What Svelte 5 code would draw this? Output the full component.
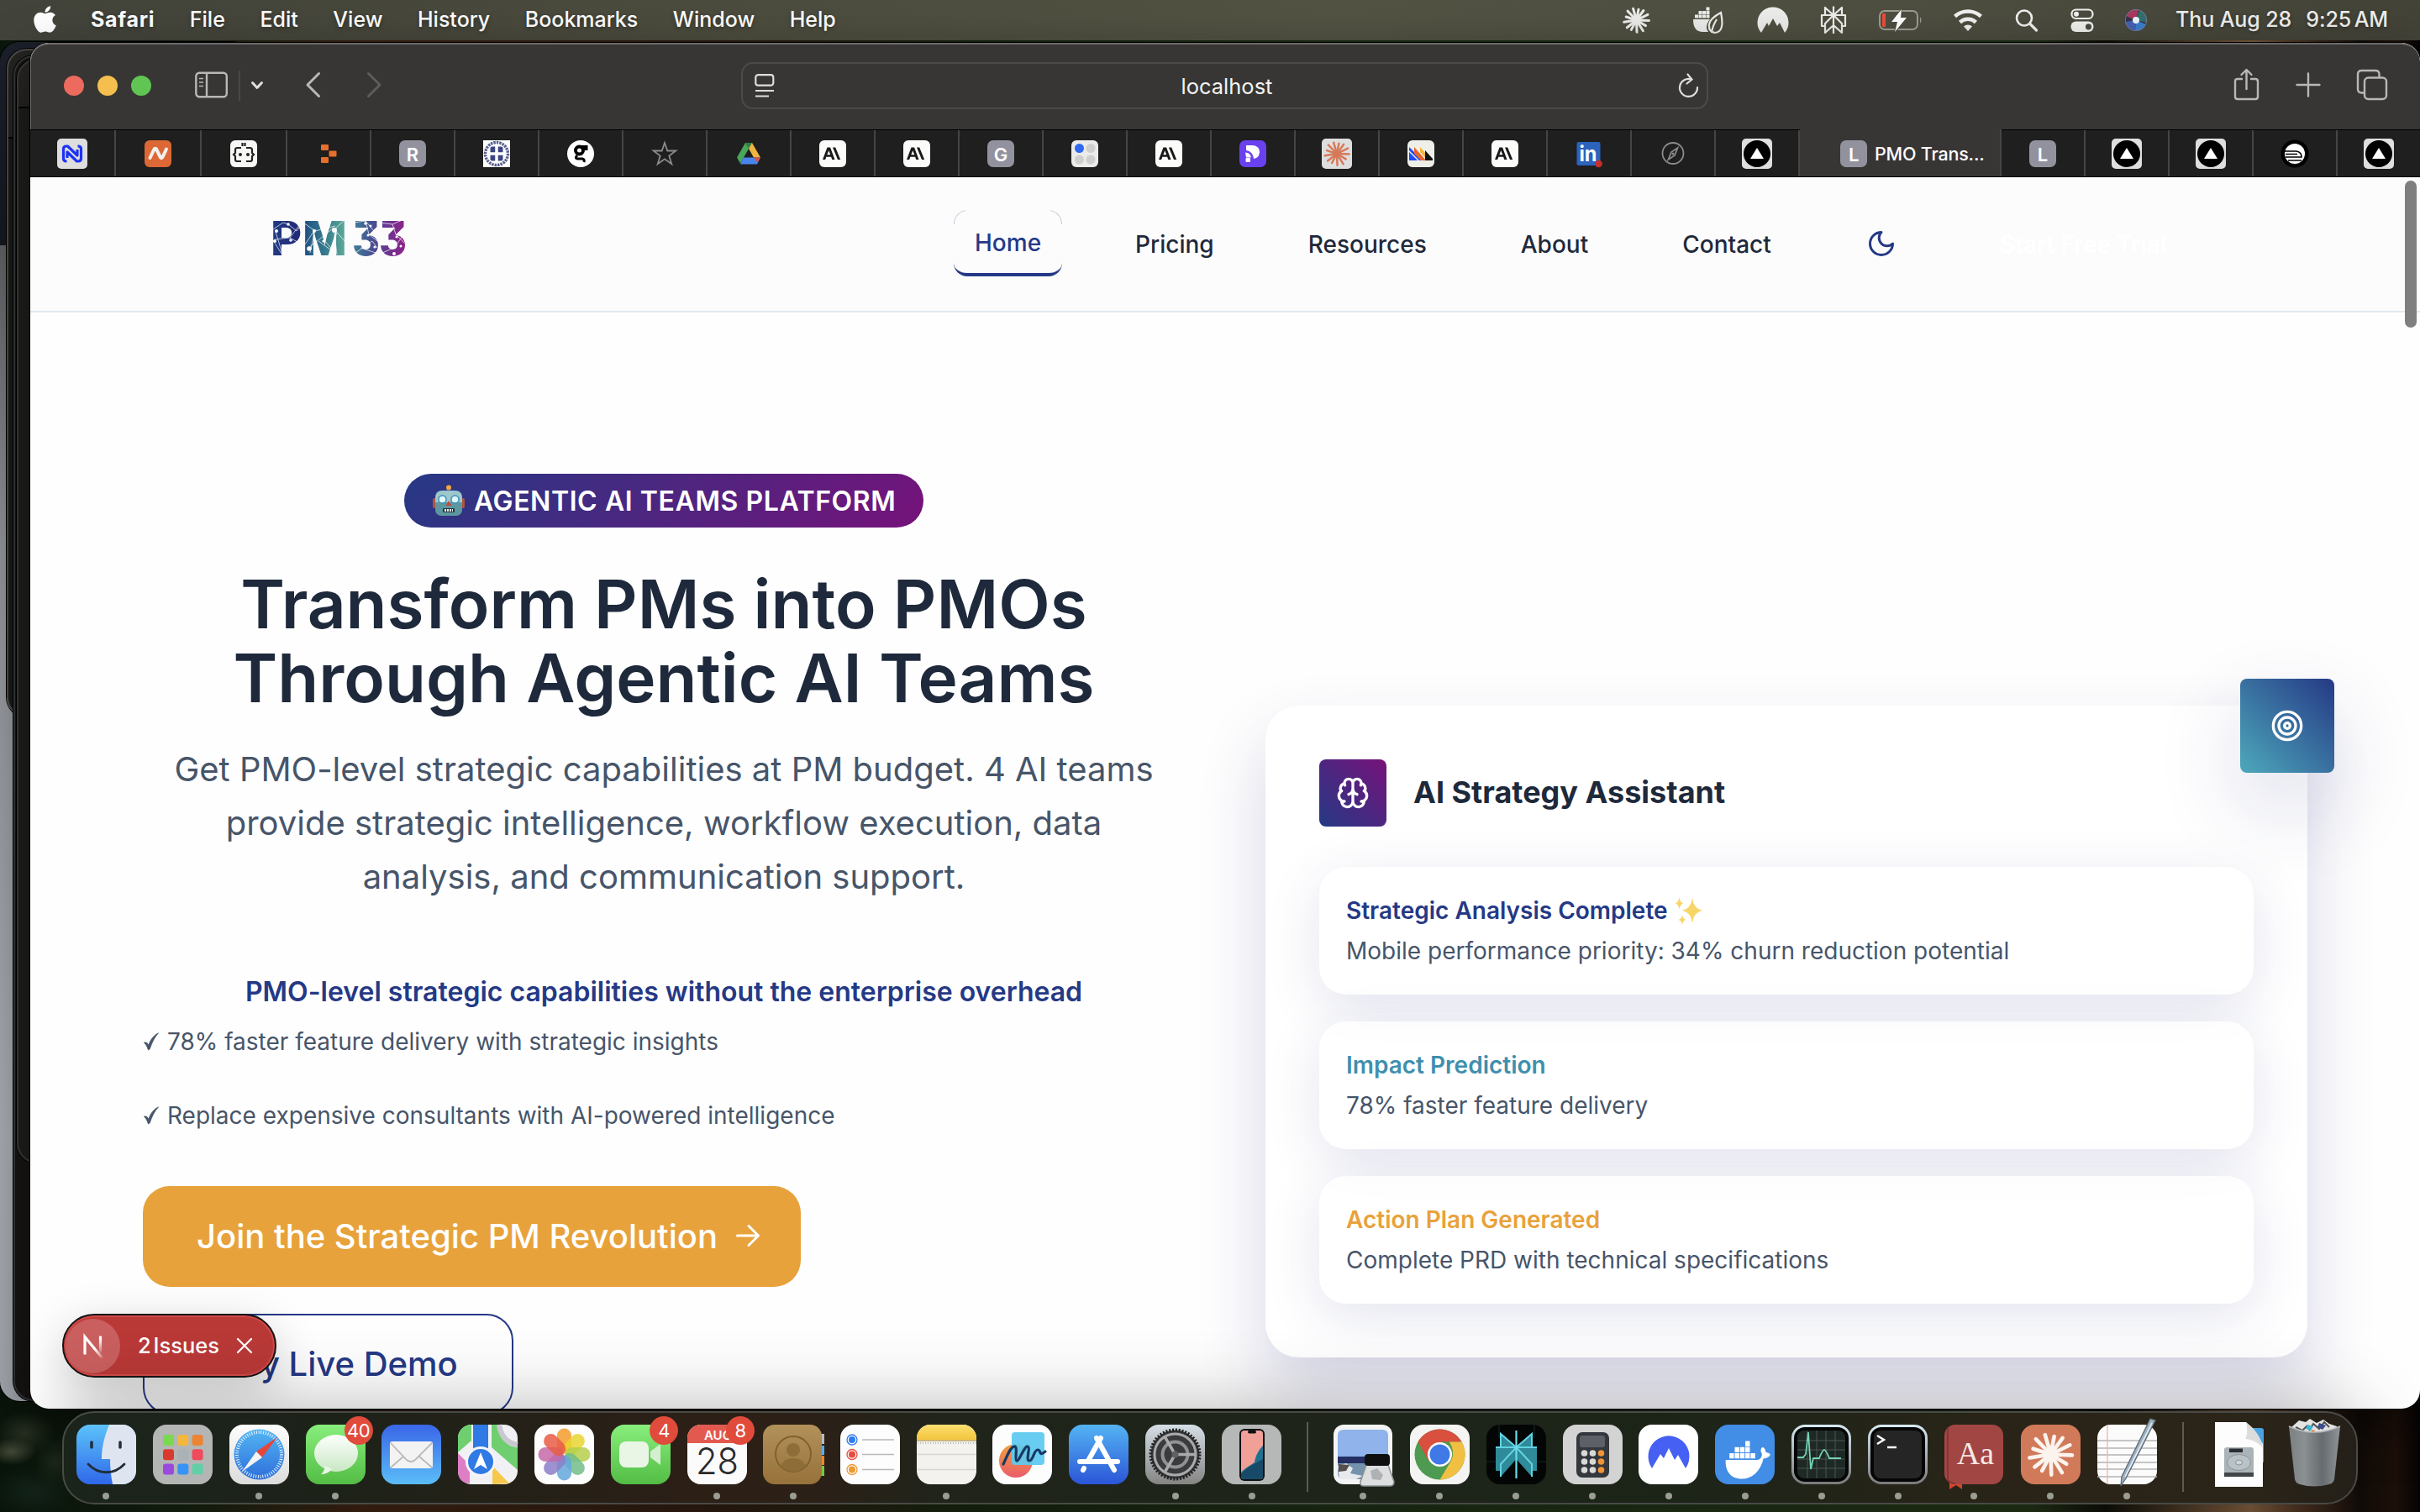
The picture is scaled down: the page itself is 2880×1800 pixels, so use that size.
<script>
  const menus = ['File', 'Edit', 'View', 'History', 'Bookmarks', 'Window', 'Help'];

  // Uneven sunburst used by the Claude mark, centred on 0,0.
  const burst = (r, w, color) =>
    [2, 31, 58, 88, 118, 142, 171, 198, 226, 254, 281, 306, 334]
      .map((a, i) => {
        const len = r * (i % 3 === 1 ? 0.86 : i % 2 ? 0.95 : 1);
        const t = (a * Math.PI) / 180;
        return `<line x1="0" y1="0" x2="${(Math.cos(t) * len).toFixed(1)}" y2="${(Math.sin(t) * len).toFixed(1)}" stroke="${color}" stroke-width="${w}" stroke-linecap="round"/>`;
      })
      .join('');

  const whale = (c) =>
    `<path fill="${c}" d="M-27 -1H15c4-1 6-4 6-8-3-5-1-8 1-9 3 2 4 4 4 7 3 0 5 1 6 3-2 4-6 5-9 5-4 17-15 27-29 27C-20 24-28 14-27-1Z"/><g fill="${c}"><path d="M-22-10h6v7h-6zM-15-10h6v7h-6zM-8-10h6v7h-6zM-1-10h6v7h-6zM6-10h6v7H6zM-15-18h6v7h-6zM-8-18h6v7h-6zM-1-18h6v7h-6zM-1-26h6v7h-6z"/></g>`;

  const plex = (c, w) =>
    `<g fill="none" stroke="${c}" stroke-width="${w}" stroke-linejoin="round"><path d="M0-16.500V16M0-6L-10-15V-6M0-6L10-15V-6M-10-6H-14V7H-10M10-6H14V7H10M-14-6H14M0-6L-10 4V15L0 6M0-6L10 4V15L0 6"/></g>`;

  const tile = (fill) => `<rect x="2" y="2" width="32" height="32" rx="6" fill="${fill}"/>`;
  const letterTile = (l) =>
    `<rect x="2" y="2" width="32" height="32" rx="7" fill="#92929f"/><text x="18" y="26.5" text-anchor="middle" font-size="22" font-weight="600" fill="#fff">${l}</text>`;
  const anthropic =
    tile('#fbfbfa') +
    '<path fill="#191919" fill-rule="evenodd" d="M11.500 10.500h3.600l5.400 14.600h-3.200l-1.200-3.300h-5.800L9.200 25.100H6zM13.300 14.200l-2 5h4zM18 10.500h3.200l6 14.600H24z"/>';
  const triangle =
    '<rect width="36" height="36" rx="5" fill="#dedede"/><circle cx="18" cy="18" r="16" fill="#000"/><path d="M18 11l8 13H10z" fill="#fff"/>';

  const fav = {
    n: '<rect width="36" height="36" rx="5" fill="#dedede"/><path d="M11.500 27H11q-3.500 0-3.500-3.500v-11Q7.500 9 11 9h1.500L24 20V13M24.500 9h.5q3.500 0 3.500 3.500v11q0 3.500-3.500 3.500h-1.500L12 16v7" fill="none" stroke="#1c33f5" stroke-width="3.200" stroke-linejoin="round"/>',
    neon: tile('#dc6836') + '<path d="M8.500 23l5-10.500q1-1.500 2.500 0l5 10q1 1.500 2.500-.5L28 12.500" fill="none" stroke="#f3f0ee" stroke-width="4" stroke-linecap="round" stroke-linejoin="round"/>',
    bot: tile('#f7f7f6') + '<g fill="none" stroke="#222" stroke-width="2.200"><path d="M15 11H10.500Q8 11 8 13.500V17L6 19l2 2v4q0 2 2.500 2H15M21 11h4.500Q28 11 28 13.500V17l2 2-2 2v4q0 2-2.500 2H21M16.500 5v4M19.500 5v4"/></g><circle cx="14" cy="19" r="2" fill="#222"/><circle cx="23" cy="19" r="2" fill="#222"/>',
    steps: '<g fill="#e66f2d"><rect x="9" y="7" width="9" height="7" rx="1"/><rect x="18.500" y="14.500" width="9" height="7" rx="1"/><rect x="9" y="22" width="9" height="7" rx="1"/></g>',
    R: letterTile('R'),
    G: letterTile('G'),
    L: letterTile('L'),
    cross: '<rect x="2" y="2" width="32" height="32" fill="#fff"/><circle cx="18" cy="18" r="13.500" fill="none" stroke="#5b6190" stroke-width="3.500" stroke-dasharray="2.500 1"/><rect x="10.500" y="9.500" width="15" height="17" rx="2" fill="#3c4583"/><path d="M18 9v18M10 18h16" stroke="#fff" stroke-width="3.500"/>',
    g: '<circle cx="18" cy="18" r="16" fill="#fff"/><circle cx="16.500" cy="14" r="4.500" fill="none" stroke="#000" stroke-width="4"/><path d="M20 9.500h5v3h-4zM14 20q-4 4 2 4h4q3 .5 2 4" fill="none" stroke="#000" stroke-width="3"/>',
    star: '<path d="M18 5l3.300 9.500h10l-8 6 3 9.800-8.300-6-8.300 6 3-9.800-8-6h10z" fill="none" stroke="#8b8b8a" stroke-width="1.800"/>',
    drive: '<path d="M14 5h8l10 17.500h-8z" fill="#f0b53f"/><path d="M14 5L4 22.500l4 7L18 12z" fill="#4aa65a"/><path d="M14 5h8l-4 7z" fill="#2f7f43"/><path d="M11.500 22.500H32l-4 8H8z" fill="#4b83ec"/><path d="M24 22.500h8l-3.500 6z" fill="#dd4f40"/>',
    A: anthropic,
    dots: tile('#ebebea') + '<circle cx="11.500" cy="11.500" r="5.500" fill="#3069f0"/><g fill="#cfcfcf"><circle cx="25" cy="11.500" r="5.500"/><circle cx="11.500" cy="25" r="5.500"/><circle cx="25" cy="25" r="5.500"/></g>',
    P: '<rect x="2" y="2" width="32" height="32" rx="7" fill="#6a41ee"/><path d="M10 8h8a8 7.500 0 0 1 8 8.500q-1 7-7 7.500-1-9-9-10z" fill="#fff"/><path d="M9 16.500q6 0 7 6H10z" fill="#fff"/><rect x="9.500" y="23" width="5.500" height="5" rx="1" fill="#fff"/>',
    claude: `<rect width="36" height="36" rx="5" fill="#dedede"/><g transform="translate(18 18)">${burst(14.5, 2.5, '#d67a59')}</g>`,
    hog: tile('#eeefe9') + '<path d="M4 10l16 16h-4L4 14z" fill="#1d4aff"/><path d="M4 16l10 10H4z" fill="#1d4aff"/><path d="M10 10l14 16h-6L10 18z" fill="#e6662e"/><path d="M17 10l9 10v6l-9-10z" fill="#f2b83a"/><path d="M23 14l9 10v2h-9z" fill="#111"/>',
    in: '<rect x="3.500" y="4" width="28" height="28" rx="2" fill="#2b63bd"/><text x="17" y="27" text-anchor="middle" font-size="25" font-weight="700" fill="#fff" textLength="21" lengthAdjust="spacingAndGlyphs">in</text><circle cx="29.500" cy="30" r="4.300" fill="#c7302b"/>',
    compass: '<circle cx="18" cy="17.500" r="12.500" fill="none" stroke="#8b8b8a" stroke-width="1.800"/><path d="M23.500 11l-3.500 9-7.500 5 3.500-9z" fill="none" stroke="#8b8b8a" stroke-width="1.800"/><circle cx="18" cy="18" r="1.500" fill="#8b8b8a"/>',
    tri: triangle,
    dome: '<circle cx="18" cy="18" r="16.500" fill="#000"/><circle cx="18" cy="18" r="12" fill="#fff"/><path d="M6 15h14q6 1 6 7H7M7 18.500h14M10 26h16" fill="none" stroke="#000" stroke-width="1.600"/>'
  };

  const tabs = ['n', 'neon', 'bot', 'steps', 'R', 'cross', 'g', 'star', 'drive', 'A', 'A', 'G', 'dots', 'A', 'P', 'claude', 'hog', 'A', 'in', 'compass', 'tri', 'active', 'L', 'tri', 'tri', 'dome', 'tri'];

  const base = (fill) => `<rect x="1" y="1" width="71" height="71" rx="16" fill="${fill}"/>`;
  const petals = ['#f39c2d', '#e9d52f', '#b5cf4a', '#72bd8a', '#65a7dc', '#8b7fc9', '#c568a7', '#e95c45']
    .map((c, i) => `<rect x="-8.500" y="-31" width="17" height="30" rx="8.500" fill="${c}" opacity=".85" transform="rotate(${i * 45})"/>`)
    .join('');
  const pads = ['#79d94f', '#f3b73c', '#ec8433', '#d83a2f', '#a9b2b6', '#ee4b5d', '#9a49dd', '#3793f6', '#62cfa6']
    .map((c, i) => `<rect x="${13 + (i % 3) * 17.3}" y="${13 + Math.floor(i / 3) * 17.3}" width="13" height="13" rx="3" fill="${c}"/>`)
    .join('');
  const keys = [0, 1, 2]
    .flatMap((r) => [0, 1, 2].map((c) => `<circle cx="${26.5 + c * 10}" cy="${35 + r * 10}" r="3.800" fill="${c === 2 ? '#f09437' : '#d9d9d9'}"/>`))
    .join('');

  const art = {
    finder: base('url(#dBlue)') + '<path d="M40 1C33 18 31 30 31 42h10c0 10 1 20 3 30h12a16 16 0 0 0 16-16V17A16 16 0 0 0 56 1z" fill="#dfe5f0"/><path d="M19 22v6M53 22v6" stroke="#222d38" stroke-width="3.500" stroke-linecap="round"/><path d="M15 48c12 13 31 13 43 0" fill="none" stroke="#222d38" stroke-width="2.800" stroke-linecap="round"/>',
    launchpad: base('#b4b6b5') + pads,
    safari: base('url(#dWhite)') + '<circle cx="36.500" cy="36.500" r="30" fill="url(#dSaf)"/><circle cx="36.500" cy="36.500" r="26.500" fill="none" stroke="#e9f5ff" stroke-width="4" stroke-dasharray="1 1.800"/><path d="M58 16L40 40l-7-7z" fill="#e6453a"/><path d="M16 57l17-24 7 7z" fill="#f4f4f4"/>',
    messages: base('url(#dGreen)') + '<ellipse cx="37" cy="35" rx="26" ry="22" fill="url(#dBub)"/><path d="M24 50q-1 7-5 10 8 0 13-6z" fill="#eaf5e8"/>',
    mail: base('url(#dMail)') + '<rect x="11" y="21" width="51" height="32" rx="3" fill="#f3f3f3"/><path d="M12 23l19 20q5 4 10 0l20-20M12 52l15-13M61 52L46 39" fill="none" stroke="#b9b9b9" stroke-width="1.800"/>',
    maps: base('#f1f0f4') + '<path d="M1 17A16 16 0 0 1 17 1l0 19L1 34z" fill="#6fcf70"/><path d="M41 1h9c0 18 10 26 22 27v27L41 28z" fill="#6fcf70"/><path d="M1 35l14 14v22Q1 70 1 56z" fill="#de7fc5"/><path d="M42 50l20 21-20 1z" fill="#f6c84c"/><path d="M19 1h18v34H19z" fill="#2f7ae5"/><path d="M50 1c2 14 10 22 22 24" fill="none" stroke="#c9c8cf" stroke-width="6"/><circle cx="28" cy="45" r="18" fill="#f5f5f8"/><circle cx="28" cy="45" r="15" fill="#2f7ae5"/><path d="M28 34l8 20-8-5-8 5z" fill="#fff"/>',
    photos: base('#fdfdfd') + `<g transform="translate(36.500 36.500)">${petals}</g>`,
    facetime: base('url(#dGreen)') + '<rect x="11" y="21" width="35" height="31" rx="8" fill="#e9f6e6"/><path d="M48 33l12-9v25l-12-9z" fill="#d5eecf"/>',
    calendar: base('#fbfbfb') + '<path d="M1 23V17A16 16 0 0 1 17 1h39a16 16 0 0 1 16 16v6z" fill="#e25a4f"/><text x="21" y="18.500" font-size="15" font-weight="600" fill="#fff">AUG</text><text x="36.500" y="60" text-anchor="middle" font-size="43" font-weight="300" fill="#2b2b2b" textLength="51" lengthAdjust="spacingAndGlyphs">28</text>',
    contacts: '<path d="M62 12h11v12H62z" fill="#b9b9b9"/><path d="M62 26h11v11H62z" fill="#5aaee9"/><path d="M62 38h11v11H62z" fill="#e9872e"/><path d="M62 50h11v12H62z" fill="#7ac943"/><rect x="0" y="1" width="70" height="71" rx="14" fill="url(#dTan)"/><g fill="none" stroke="#80602f" stroke-width="2"><circle cx="36" cy="36" r="21"/></g><circle cx="36" cy="31" r="8" fill="#8e6d38"/><path d="M21 50q4-9 15-9t15 9q-6 7-15 7t-15-7z" fill="#8e6d38"/>',
    reminders: base('#fdfdfd') + '<g fill="none" stroke-width="1.300"><circle cx="15" cy="19" r="6" stroke="#2f7bf0"/><circle cx="15" cy="36.500" r="6" stroke="#e84c3d"/><circle cx="15" cy="54.500" r="6" stroke="#ee9a34"/></g><circle cx="15" cy="19" r="4" fill="#2f7bf0"/><circle cx="15" cy="36.500" r="4" fill="#e84c3d"/><circle cx="15" cy="54.500" r="4" fill="#ee9a34"/><path d="M27 19h38M27 36.500h38M27 54.500h38" stroke="#b9b9be" stroke-width="1.500"/>',
    notes: base('#f4f2ee') + '<path d="M1 19V17A16 16 0 0 1 17 1h39a16 16 0 0 1 16 16v2z" fill="url(#dYel)"/><path d="M1 20h71" stroke="#c9b880" stroke-width="2"/><path d="M2 23h70" stroke="#bbb" stroke-width="2" stroke-dasharray="1 2"/><path d="M1 36.500h71M1 54.500h71" stroke="#d8d6d1" stroke-width="1.500"/>',
    freeform: base('#fdfdfd') + '<circle cx="29" cy="44" r="20" fill="url(#dOr)"/><rect x="24" y="10" width="39" height="39" rx="4" fill="#5ec9f0" opacity=".93"/><path d="M14 48c5-10 8-20 13-21s0 16 3 17 9-18 13-17-3 17 2 17 5-13 10-13 0 9 9 2" fill="none" stroke="#163a66" stroke-width="3.200" stroke-linecap="round"/>',
    appstore: base('url(#dApp)') + '<g stroke="#fff" stroke-width="6" stroke-linecap="round" fill="none"><path d="M34 17l21 38M39 17L24 44M14 45h45M19 53l-1 2"/></g>',
    settings: base('url(#dGray)') + '<circle cx="36.500" cy="36.500" r="29" fill="#3a3b3d"/><circle cx="36.500" cy="36.500" r="29" fill="none" stroke="#222" stroke-width="4" stroke-dasharray="2 1.800"/><circle cx="36.500" cy="36.500" r="24.500" fill="none" stroke="#a8aaac" stroke-width="3"/><circle cx="36.500" cy="36.500" r="15" fill="none" stroke="#8f9193" stroke-width="4"/><path d="M36.500 36.500H60M36.500 36.500L24.500 16M36.500 36.500L24.500 57" stroke="#a8aaac" stroke-width="3.500"/><circle cx="36.500" cy="36.500" r="4" fill="#606163"/>',
    iphone: base('#b5b8b7') + '<rect x="22" y="6" width="30" height="62" rx="6" fill="#101214"/><rect x="24" y="8" width="26" height="58" rx="4" fill="#f0a096"/><path d="M50 26c-5 5-9 12-10 20-6 4-13 8-16 12v4q0 4 4 4h18q4 0 4-4z" fill="#22708f"/><path d="M50 42c-11 6-20 10-26 18v2q0 4 4 4h18q4 0 4-4z" fill="#164a68"/><rect x="32" y="8" width="10" height="3.500" rx="1.700" fill="#101214"/>',
    preview: '<rect x="1" y="1" width="70" height="71" rx="12" fill="#f4f4f4"/><path d="M6 40V14q0-7 7-7h46q7 0 7 7v26z" fill="#8fb3ea"/><path d="M6 39h60v8H6z" fill="#252f63"/><path d="M6 47h60v19H13q-7 0-7-7z" fill="#7592ac"/><path d="M6 50l10-3 8 6-3 6 15 3-8 4H8z" fill="#e7e9ec"/><path d="M7 48l13 1-4 7-9 1z" fill="#574e50"/><path d="M40 49h26l7 20q0 5-5 5H37q-5 0-4-5z" fill="#dddedf" stroke="#8b8f92" stroke-width="1.500"/><rect x="38" y="36" width="30" height="14" rx="4" fill="#101010"/><path d="M45 56l8-3 7 8-3 6-10-1z" fill="#aeb2b5"/>',
    chrome: base('#f4f4f3') + '<circle cx="36.500" cy="36.500" r="30" fill="#4d9a50"/><path d="M36.500 6.500a30 30 0 0 1 26 15H36.500L23 44 10.500 21.500a30 30 0 0 1 26-15z" fill="#d9503f"/><path d="M62.500 21.500a30 30 0 0 1-26 45L50 44q5-10-2-22.500z" fill="#f1bf41"/><circle cx="36.500" cy="36.500" r="14.500" fill="#fff"/><circle cx="36.500" cy="36.500" r="12" fill="#3f79e6"/>',
    perplexity: base('#040606') + '<path d="M16 1v16M58 1v16M1 45h13M60 45h12" stroke="#172425" stroke-width="1.200"/><g fill="#2f8a99"><path d="M36.500 28L18 11v17h-6v28h6v7l18.500-21L55 63v-7h6V28h-6V11z"/></g><path d="M36.500 28L18 12v16M36.500 28L55 12v16M12 28h49M36.500 28L18 48v15M36.500 28L55 48v15" fill="none" stroke="#62d3e2" stroke-width="2"/><path d="M36.500 8v57" stroke="#6fdcea" stroke-width="2.200"/>',
    calculator: base('#d2d3d2') + '<rect x="17" y="10" width="39" height="54" rx="7" fill="#34373c"/><rect x="21" y="14" width="30" height="14" rx="3" fill="#5d6167"/>' + keys,
    nord: base('#fff') + '<path d="M17 53a24.500 24.500 0 1 1 40 0L48 37l-4 6-7-14-6 12-4-5z" fill="#4560f3"/>',
    docker: base('#428de5') + `<g transform="translate(38 44) scale(.9)">${whale('#fff')}</g>`,
    activity: base('url(#dRim)') + '<rect x="4" y="4" width="65" height="65" rx="13" fill="#060606"/><rect x="8" y="8" width="57" height="57" rx="8" fill="#1e2926"/><path d="M20 8v57M31 8v57M42 8v57M53 8v57M8 20h57M8 31h57M8 42h57M8 53h57" stroke="#4b5753" stroke-width="1"/><path d="M8 40h7l3-4 3-26 3 44 3-13h7q4-10 6-10t6 10h14" fill="none" stroke="#74d2b0" stroke-width="1.800"/>',
    terminal: base('url(#dRim)') + '<rect x="4" y="4" width="65" height="65" rx="13" fill="#050505"/><rect x="8" y="8" width="57" height="57" rx="8" fill="#252525"/><path d="M12 14l8 5-8 5" fill="none" stroke="#fff" stroke-width="2.500"/><path d="M24 28h11" stroke="#fff" stroke-width="2.500"/>',
    dictionary: '<path d="M7 64h15v14l-7-5-8 5z" fill="#d3452f"/><rect x="1" y="1" width="70" height="71" rx="13" fill="#a24644"/><path d="M5 4v63q4 4 9 4" fill="none" stroke="#7c302f" stroke-width="1.500"/><text x="38" y="48" text-anchor="middle" font-size="38" fill="#f4e9e5" style="font-family:\'Liberation Serif\',serif">Aa</text>',
    claude: base('#d17a5a') + `<g transform="translate(36.500 36.500)">${burst(25.5, 4.6, '#fbf3ee')}</g>`,
    textedit: base('#fbfbfb') + '<path d="M1 20h71M1 29h71M1 37h71M1 46h71M1 54h71M1 63h71" stroke="#b4b4b4" stroke-width="1.300"/><path d="M13 1v71" stroke="#edb4ac" stroke-width="1.300"/><path d="M64-6l6 2L35 65l-6 9 1-11z" fill="#9fb2c3" stroke="#5d6a75" stroke-width="1.300"/><path d="M66-1L34 63" stroke="#e8eff4" stroke-width="1.500"/>',
    file: '<rect x="42" y="5" width="24" height="42" rx="3" fill="#4aa3e0"/><path d="M8-2h37l20 26v51H8z" fill="#fdfdfd"/><path d="M45-2q3 13-1 20 10 0 21 10-3-17-20-30z" fill="#dcdcdc"/><rect x="19" y="28" width="35" height="35" rx="3" fill="#aab3b8"/><rect x="25" y="29.500" width="16" height="4.500" fill="#2a2e33"/><ellipse cx="36.500" cy="46" rx="14" ry="9.500" fill="#b9c2c6" stroke="#8a9499"/><ellipse cx="36.500" cy="46" rx="4" ry="3" fill="#cdd4d7" stroke="#8a9499"/><path d="M19 58h35v5H19z" fill="#40464a"/>',
    trash: '<path d="M8 5l10-9 8 2 5-4 8 5 8-4 7 5 9 3-2 9H12z" fill="#e3e3e2"/><path d="M14 4l8 4 6-6M30 8l5-8 7 6 6-8 6 6" fill="none" stroke="#55504c" stroke-width="2"/><path d="M28 1l7 2-3 5-6-2z" fill="#38b6d4"/><path d="M42-1l8 3-4 5-6-3z" fill="#3a4c90"/><path d="M32 7l5 1-2 4z" fill="#dd7a38"/><path d="M6 3q30 14 61 0L60 66q-1 5-6 6-18 5-35 0-5-1-6-6z" fill="url(#dCan)"/><path d="M6 3q30 14 61 0" fill="none" stroke="#b5babd" stroke-width="1.500"/>'
  };

  const apps = [
    { id: 'finder', on: true }, { id: 'launchpad' }, { id: 'safari', on: true },
    { id: 'messages', on: true, badge: '40' }, { id: 'mail' }, { id: 'maps' }, { id: 'photos' },
    { id: 'facetime', badge: '4' }, { id: 'calendar', on: true, badge: '8' }, { id: 'contacts', on: true },
    { id: 'reminders' }, { id: 'notes', on: true }, { id: 'freeform' }, { id: 'appstore' },
    { id: 'settings', on: true }, { id: 'iphone', on: true }, { id: '|' },
    { id: 'preview', on: true }, { id: 'chrome', on: true }, { id: 'perplexity', on: true },
    { id: 'calculator', on: true }, { id: 'nord', on: true }, { id: 'docker', on: true },
    { id: 'activity', on: true }, { id: 'terminal', on: true }, { id: 'dictionary', on: true },
    { id: 'claude', on: true }, { id: 'textedit', on: true }, { id: '|' },
    { id: 'file' }, { id: 'trash' }
  ];

  const insights = [
    { tone: 'navy', title: 'Strategic Analysis Complete', spark: true, text: 'Mobile performance priority: 34% churn reduction potential' },
    { tone: 'teal', title: 'Impact Prediction', text: '78% faster feature delivery' },
    { tone: 'gold', title: 'Action Plan Generated', text: 'Complete PRD with technical specifications' }
  ];
</script>

<div class="desktop">
  <svg class="defs" width="0" height="0" aria-hidden="true">
    <defs>
      <linearGradient id="dBlue" x2="0" y2="1"><stop stop-color="#5cc3fa" /><stop offset="1" stop-color="#2f68ea" /></linearGradient>
      <linearGradient id="dSaf" x2="0" y2="1"><stop stop-color="#53b5f2" /><stop offset="1" stop-color="#2d6fdc" /></linearGradient>
      <linearGradient id="dWhite" x2="0" y2="1"><stop stop-color="#fdfdfd" /><stop offset="1" stop-color="#dcdcdc" /></linearGradient>
      <linearGradient id="dGreen" x2="0" y2="1"><stop stop-color="#88ee7c" /><stop offset="1" stop-color="#53bd44" /></linearGradient>
      <linearGradient id="dBub" x2="0" y2="1"><stop stop-color="#fdfffd" /><stop offset="1" stop-color="#c9e8c4" /></linearGradient>
      <linearGradient id="dMail" x2="0" y2="1"><stop stop-color="#3a66e8" /><stop offset="1" stop-color="#5bbdf8" /></linearGradient>
      <linearGradient id="dTan" x2="0" y2="1"><stop stop-color="#b2915a" /><stop offset="1" stop-color="#97723a" /></linearGradient>
      <linearGradient id="dYel" x2="0" y2="1"><stop stop-color="#fadf70" /><stop offset="1" stop-color="#f3c53d" /></linearGradient>
      <linearGradient id="dOr" x2="0" y2="1"><stop stop-color="#f2a13c" /><stop offset="1" stop-color="#ea5c6c" /></linearGradient>
      <linearGradient id="dApp" x2="0" y2="1"><stop stop-color="#54b4f3" /><stop offset="1" stop-color="#2b55d8" /></linearGradient>
      <linearGradient id="dGray" x2="0" y2="1"><stop stop-color="#d5dfe6" /><stop offset="1" stop-color="#858583" /></linearGradient>
      <linearGradient id="dRim" x2="0" y2="1"><stop stop-color="#d6eaf2" /><stop offset="1" stop-color="#7a7a7c" /></linearGradient>
      <linearGradient id="dCan"><stop stop-color="#7b8083" /><stop offset=".3" stop-color="#8b9093" /><stop offset=".65" stop-color="#666b6f" /><stop offset="1" stop-color="#8f9497" /></linearGradient>
    </defs>
  </svg>

  <div class="behind pale"></div>
  <div class="behind slate"></div>
  <div class="behind tall"></div>
  <div class="behind front"></div>

  <header class="menubar">
    <svg class="apple" viewBox="0 0 384 512"><path fill="#fff" d="M318.700 268.700c-.2-36.700 16.400-64.400 50-84.800-18.800-26.900-47.200-41.700-84.700-44.600-35.500-2.800-74.300 20.700-88.500 20.700-15 0-49.400-19.700-76.400-19.700C63.300 141.200 4 184.800 4 273.500q0 39.300 14.400 81.200c12.800 36.700 59 126.700 107.200 125.200 25.200-.6 43-17.900 75.800-17.900 31.800 0 48.300 17.900 76.400 17.900 48.600-.7 90.400-82.500 102.600-119.300-65.200-30.700-61.700-90-61.700-91.900zm-56.600-164.200c27.300-32.400 24.800-61.900 24-72.500-24.100 1.400-52 16.400-67.900 34.900-17.500 19.800-27.800 44.300-25.600 71.900 26.100 2 49.900-11.400 69.500-34.300z" /></svg>
    <nav class="menus">
      <b>Safari</b>
      {#each menus as m}<span>{m}</span>{/each}
    </nav>
    <div class="status">
      <svg width="85" viewBox="-42.500 -18 85 36">{@html burst(15, 3, '#ececea')}</svg>
      <svg width="82" viewBox="-41 -18 82 36">
        <path fill="#ececea" d="M-16-1H4Q-3 7 2 14H-3Q-16 15-16-1zM-14-6.500h4v4h-4zM-9.500-6.500h4v4h-4zM-5-6.500h4v4h-4zM-.5-6.500h4v4h-4zM-9.500-11h4v4h-4zM-5-11h4v4h-4zM-.5-11h4v4h-4zM-.5-15.500h4v4h-4z" />
        <path d="M17-9q5 23-7 24-8-1-7-10 1-7 14-14zM12-1Q7 7 6 15" fill="none" stroke="#ececea" stroke-width="2.200" />
      </svg>
      <svg width="76" viewBox="-38 -18 76 36"><path d="M-14 15a18.500 18.500 0 1 1 28 0L8 3 5 7 0-2-5 7-7 3z" fill="#ececea" /></svg>
      <svg width="68" viewBox="-34 -18 68 36">{@html plex('#ececea', 2.2)}</svg>
      <svg width="88" viewBox="-44 -18 88 36">
        <rect x="-23" y="-11" width="45" height="22" rx="6" fill="none" stroke="#9c9c93" stroke-width="2" />
        <path d="M25-4q3 4 0 8z" fill="#9c9c93" />
        <rect x="-20" y="-8" width="4" height="16" rx="1" fill="#ee4c38" />
        <path d="M3-13L-9 2h7l-3 12L9-3H2z" fill="#fff" stroke="#4c4d40" stroke-width="2" paint-order="stroke" />
      </svg>
      <svg width="76" viewBox="-38 -18 76 36">
        <g fill="none" stroke="#f0f0ee" stroke-width="4.500"><path d="M-15.500-4.500a23 23 0 0 1 31 0M-9.500 2.500a14 14 0 0 1 19 0" /></g>
        <path d="M0 13L-5 7.500a7.500 7.500 0 0 1 10 0z" fill="#f0f0ee" />
      </svg>
      <svg width="62" viewBox="-31 -18 62 36"><circle cx="-2" cy="-2.500" r="9" fill="none" stroke="#f0f0ee" stroke-width="2.600" /><path d="M5 4.500l7.500 7.500" stroke="#f0f0ee" stroke-width="3.200" stroke-linecap="round" /></svg>
      <svg width="72" viewBox="-36 -18 72 36">
        <rect x="-12.500" y="-12.500" width="25" height="10.500" rx="5" fill="none" stroke="#f0f0ee" stroke-width="2.200" /><circle cx="-7" cy="-7.200" r="3" fill="#f0f0ee" />
        <rect x="-13.500" y="1.500" width="27" height="12.500" rx="6" fill="#f0f0ee" /><circle cx="7.500" cy="7.800" r="3.600" fill="#4a4b3e" />
      </svg>
      <svg width="56" viewBox="-28 -18 56 36">
        <circle r="13.500" fill="#35334c" />
        <path d="M-12-5A13 13 0 0 1 3-12.500L0 0z" fill="#a8385f" /><path d="M-13 2q2 10 12 11L0 0z" fill="#4660b4" /><path d="M4-12A13 13 0 0 1 13 3L0 0z" fill="#33706e" /><path d="M-1 13Q9 13 12 5L0 0z" fill="#3b7fd0" />
        <circle r="4" fill="#e9f3fb" /><circle r="12.800" fill="none" stroke="#7a7c86" stroke-width="1" />
      </svg>
      <span class="clock"><span>Thu Aug 28</span> <span class="time">9:25 AM</span></span>
    </div>
  </header>

  <main class="window">
    <div class="toolbar">
      <div class="lights"><i class="red"></i><i class="yellow"></i><i class="green"></i></div>
      <svg class="sidebar" viewBox="0 0 40 32" fill="none" stroke="#b9b8b7" stroke-width="2.400"><rect x="1.300" y="1.800" width="36.500" height="28.500" rx="4" /><path d="M14 2v28" /><path d="M5 8.500h5M5 13h5M5 17.500h5" stroke-width="1.600" /></svg>
      <i class="rule"></i>
      <svg class="caret" viewBox="0 0 16 12"><path d="M2.500 2.500L8 8.500l5.500-6" fill="none" stroke="#dededd" stroke-width="3" stroke-linecap="round" stroke-linejoin="round" /></svg>
      <svg class="arrow" viewBox="0 0 18 30"><path d="M15.500 1.500L2 15l13.500 13.500" fill="none" stroke="#b9b8b7" stroke-width="3" stroke-linecap="round" stroke-linejoin="round" /></svg>
      <svg class="arrow fwd" viewBox="0 0 18 30"><path d="M2.500 1.500L16 15 2.500 28.500" fill="none" stroke="#5d5c5a" stroke-width="3" stroke-linecap="round" stroke-linejoin="round" /></svg>
      <div class="address">
        <svg width="24" height="28" viewBox="0 0 24 28" fill="none" stroke="#dddddc"><rect x="1.300" y="1.200" width="21" height="12.500" rx="3" stroke-width="2.200" /><path d="M1 20h22M1 26.500h16" stroke-width="2.200" /></svg>
        <span>localhost</span>
        <svg width="24" height="30" viewBox="0 0 24 30" fill="none" stroke="#dddddc" stroke-width="2.200" stroke-linecap="round"><path d="M15 7.500A10.500 10.500 0 1 0 22 17M10.500 1.500l5 6-6 5" /></svg>
      </div>
      <div class="actions">
        <svg width="32" height="40" viewBox="0 0 32 40" fill="none" stroke="#b9b8b7" stroke-width="2.400" stroke-linecap="round" stroke-linejoin="round"><path d="M10 13H5q-3 0-3 3V34q0 3 3 3h21q3 0 3-3V16q0-3-3-3H21M15.500 25V2.500M9.500 8l6-6 6 6" /></svg>
        <svg width="30" height="30" viewBox="0 0 30 30" stroke="#b9b8b7" stroke-width="2.400" stroke-linecap="round"><path d="M15 1.500v27M1.500 15h27" /></svg>
        <svg width="38" height="38" viewBox="0 0 38 38" fill="none" stroke="#b9b8b7" stroke-width="2.400"><rect x="10" y="10.500" width="26" height="25.500" rx="4.500" /><path d="M10 28.500H6.500Q2 28.500 2 24V6.500Q2 2 6.500 2H23q4.500 0 4.500 4.500v4" /></svg>
      </div>
    </div>

    <div class="tabs">
      {#each tabs as t}
        {#if t === 'active'}
          <div class="tab active"><svg viewBox="0 0 36 36">{@html fav.L}</svg><span>PMO Trans...</span></div>
        {:else}
          <div class="tab"><svg viewBox="0 0 36 36">{@html fav[t]}</svg></div>
        {/if}
      {/each}
    </div>

    <div class="page">
      <div class="site-head">
        <svg class="logo" viewBox="0 0 160 46">
          <defs>
            <linearGradient id="lg" gradientUnits="userSpaceOnUse" x1="0" x2="160" y1="0" y2="0">
              <stop stop-color="#203a83" /><stop offset=".2" stop-color="#232a76" /><stop offset=".26" stop-color="#245a86" /><stop offset=".38" stop-color="#35788c" /><stop offset=".53" stop-color="#5ba898" /><stop offset=".6" stop-color="#3f7d97" /><stop offset=".74" stop-color="#484f92" /><stop offset=".85" stop-color="#6a3590" /><stop offset="1" stop-color="#951f88" />
            </linearGradient>
          </defs>
          <g fill="url(#lg)">
            <text x="-3" y="43">P</text>
            <text x="35" y="43" textLength="53" lengthAdjust="spacingAndGlyphs">M</text>
            <text x="94" y="43" textLength="33" lengthAdjust="spacingAndGlyphs">3</text>
            <text x="126" y="43" textLength="33" lengthAdjust="spacingAndGlyphs">3</text>
          </g>
          <g stroke="#fcfcfc" stroke-width=".7" fill="none"><path d="M0 12l12-8 6 2 10 8 6-8M3 15l8 26M0 25l10 16M2 24l18-2 12-16M20 22l14 8M36 4l14 10 24-6M38 30l12-18-6 28M42 34l18-14 12-10 4 32M54 26l14 10 8-20M73 12l11-10M73 12l12 14M60 24l12 14M96 4l14-2 10 12M98 40l20-14 6 8M110 2l4 16 10 8M126 4l16 2 14-6M130 40l14-6 10-14M142 6l4 12 10 10M104 34l18 6" /></g>
          <g fill="#fcfcfc"><circle cx="4" cy="14" r="2" /><circle cx="2" cy="26" r="2" /><circle cx="18" cy="6" r="1.800" /><circle cx="21" cy="25" r="1.800" /><circle cx="49" cy="14" r="2" /><circle cx="73" cy="13" r="3" /><circle cx="43" cy="35" r="2.800" /><circle cx="60" cy="26" r="1.600" /><circle cx="110" cy="5" r="1.800" /><circle cx="116" cy="8" r="1.500" /><circle cx="113" cy="19" r="1.500" /><circle cx="121" cy="33" r="1.600" /><circle cx="147" cy="21" r="1.500" /><circle cx="152" cy="32" r="1.500" /><circle cx="144" cy="41" r="2" /></g>
        </svg>
        <nav class="links">
          <a class="current" href="#home">Home</a>
          <a href="#pricing">Pricing</a>
          <a href="#resources">Resources</a>
          <a href="#about">About</a>
          <a href="#contact">Contact</a>
        </nav>
        <svg class="moon" viewBox="0 0 24 24" fill="none" stroke="#253985" stroke-width="2" stroke-linecap="round" stroke-linejoin="round"><path d="M12 3a6 6 0 0 0 9 9 9 9 0 1 1-9-9Z" /></svg>
        <span class="trial">Start Free Trial</span>
      </div>

      <div class="hero">
        <section class="pitch">
          <div class="badge">
            <svg viewBox="0 0 38 38">
              <circle cx="19" cy="3.500" r="3" fill="#f4a93a" /><path d="M17 6h4v3h-4z" fill="#7a4e9e" />
              <rect x="0" y="16" width="4" height="12" rx="2" fill="#b0543f" /><rect x="34" y="16" width="4" height="12" rx="2" fill="#b0543f" />
              <rect x="3" y="7" width="32" height="30" rx="7" fill="#5d98a0" /><path d="M3 17q0-10 9-10h14q9 0 9 10v4H3z" fill="#9cc7cc" />
              <circle cx="11.500" cy="17.500" r="4.600" fill="#dff6fb" stroke="#3d8fb3" stroke-width="1.500" /><circle cx="26.500" cy="17.500" r="4.600" fill="#dff6fb" stroke="#3d8fb3" stroke-width="1.500" />
              <path d="M19 19l3.500 6h-7z" fill="#c8473b" /><rect x="12" y="28" width="14" height="5" rx="1" fill="#29383d" /><path d="M14 30.500h10" stroke="#e4eef0" stroke-width="3" stroke-dasharray="2 1" />
            </svg>
            <span>AGENTIC AI TEAMS PLATFORM</span>
          </div>
          <h1>Transform PMs into PMOs<br />Through Agentic AI Teams</h1>
          <p class="lead">Get PMO-level strategic capabilities at PM budget. 4 AI teams<br />provide strategic intelligence, workflow execution, data<br />analysis, and communication support.</p>
          <p class="sub">PMO-level strategic capabilities without the enterprise overhead</p>
          <ul>
            {#each ['78% faster feature delivery with strategic insights', 'Replace expensive consultants with AI-powered intelligence'] as point}
              <li>
                <svg viewBox="0 0 20 22"><path d="M1.500 12q3.500-1 5.300 3.200Q10.500 4.500 18.500.8 12 8 8.300 19.800L6.500 21Q5 15.500 1.500 12z" fill="#475569" stroke="#475569" stroke-width=".8" stroke-linejoin="round" /></svg>
                <span>{point}</span>
              </li>
            {/each}
          </ul>
          <button class="cta">
            <span>Join the Strategic PM Revolution</span>
            <svg viewBox="0 0 32 32" fill="none" stroke="#fff" stroke-width="3" stroke-linecap="round" stroke-linejoin="round"><path d="M3.500 16h25M17 4.500L28.500 16 17 27.500" /></svg>
          </button>
          <button class="demo">
            <svg viewBox="0 0 24 24" fill="none" stroke="#253985" stroke-width="2" stroke-linejoin="round"><path d="M6 3l14 9-14 9z" /></svg>
            <span>Try Live Demo</span>
          </button>
        </section>

        <section class="panel">
          <div class="panel-head">
            <div class="brain">
              <svg viewBox="0 0 24 24" fill="none" stroke="#fff" stroke-width="2" stroke-linecap="round" stroke-linejoin="round"><path d="M12 5a3 3 0 1 0-5.997.125 4 4 0 0 0-2.526 5.770 4 4 0 0 0 .556 6.588A4 4 0 1 0 12 18ZM12 5a3 3 0 1 1 5.997.125 4 4 0 0 1 2.526 5.770 4 4 0 0 1-.556 6.588A4 4 0 1 1 12 18ZM15 13a4.500 4.500 0 0 1-3-4 4.500 4.500 0 0 1-3 4M17.599 6.500a3 3 0 0 0 .399-1.375M6.003 5.125A3 3 0 0 0 6.401 6.500M3.477 10.896a4 4 0 0 1 .585-.396M19.938 10.500a4 4 0 0 1 .585.396M6 18a4 4 0 0 1-1.967-.516M19.967 17.484A4 4 0 0 1 18 18" /></svg>
            </div>
            <h2>AI Strategy Assistant</h2>
          </div>
          {#each insights as it}
            <article>
              <h3 class={it.tone}>
                {it.title}
                {#if it.spark}
                  <svg viewBox="0 0 34 34" fill="#f7d568"><path d="M21 2q1.500 13 12 15-10.500 2-12 15-1.500-13-12-15 10.500-2 12-15zM5.500 1q.7 6.500 5 7.500-4.300 1-5 7.500Q4.800 9.500.5 8.500 4.800 7.500 5.500 1zM9 22q.6 5 4.500 6-3.900 1-4.500 6-.6-5-4.500-6 3.900-1 4.500-6z" /></svg>
                {/if}
              </h3>
              <p>{it.text}</p>
            </article>
          {/each}
          <div class="target">
            <svg viewBox="0 0 24 24" fill="none" stroke="#fff" stroke-width="2"><circle cx="12" cy="12" r="10" /><circle cx="12" cy="12" r="6" /><circle cx="12" cy="12" r="2" /></svg>
          </div>
        </section>
      </div>

      <i class="scroll"></i>
      <div class="issues">
        <span class="next"><svg viewBox="0 0 28 32"><defs><linearGradient id="nx" gradientUnits="userSpaceOnUse" x1="0" x2="0" y1="8" y2="27"><stop stop-color="#fff" /><stop offset="1" stop-color="#fff" stop-opacity="0" /></linearGradient><linearGradient id="ny" gradientUnits="userSpaceOnUse" x1="16" x2="26" y1="20" y2="33"><stop stop-color="#fff" /><stop offset="1" stop-color="#fff" stop-opacity="0" /></linearGradient></defs><path d="M4 26.500V5.500L24.500 30.500" fill="none" stroke="url(#ny)" stroke-width="3.200" /><path d="M22.500 4.500v20" stroke="url(#nx)" stroke-width="3.200" /></svg></span>
        <span class="count">2 Issues</span>
        <svg class="x" viewBox="0 0 20 20"><path d="M2 2l16 16M18 2L2 18" stroke="#fff" stroke-width="2.200" stroke-linecap="round" /></svg>
      </div>
    </div>
  </main>

  <footer class="dock">
    {#each apps as a}
      {#if a.id === '|'}
        <i class="split"></i>
      {:else}
        <div class="app">
          <svg viewBox="0 0 73 73">{@html art[a.id]}</svg>
          {#if a.badge}<em>{a.badge}</em>{/if}
          {#if a.on}<i class="dot"></i>{/if}
        </div>
      {/if}
    {/each}
  </footer>
</div>

<style>
  :global(body) { margin: 0; overflow: hidden; }
  .desktop {
    position: relative;
    width: 2880px;
    height: 1800px;
    overflow: hidden;
    font-family: Inter, 'Liberation Sans', sans-serif;
    background:
      radial-gradient(ellipse 30px 16px at 14px 1728px, #454b38 0, transparent 100%),
      radial-gradient(ellipse 36px 26px at 30px 1706px, #2a3324 0, transparent 100%),
      radial-gradient(ellipse 26px 30px at 66px 1740px, #1f2c1c 0, transparent 100%),
      radial-gradient(ellipse 50px 30px at 40px 1775px, #14241a 0, transparent 100%),
      linear-gradient(90deg, #0a150c 0, #14200f 8%, #3a2112 15%, #2a1a10 30%, #16230f 40%, #1c2c14 60%, #203016 84%, #0e0e08 87%, #7a5a3c 93%, #4a3220 95%, #120c08 97.500%, #1d100a 99%, #060404 100%);
  }
  .defs { position: absolute; }
  svg { display: block; overflow: visible; flex: none; }
  svg :global(text) { font-family: Inter, 'Liberation Sans', sans-serif; }

  .behind { position: absolute; box-sizing: border-box; width: 300px; box-shadow: 0 0 0 1px #000; }
  .pale { left: 0; top: 50px; height: 1618px; border-radius: 24px; background: linear-gradient(#1c202b 0, #14181f 242px, #5c5d5f 242px, #8d9095 600px, #a6aab0 1300px, #a2a6ac 100%); }
  .slate { left: 8px; top: 58px; height: 796px; border-radius: 24px; background: linear-gradient(#252422 103px, #000 103px, #000 105px, #1a1a19 105px); border: 2px solid #4c4b49; border-right: 0; }
  .tall { left: 16px; top: 66px; height: 1602px; border-radius: 24px; background: #171614; border: 2px solid #353838; }
  .front { left: 20px; top: 70px; height: 1315px; border-radius: 24px; background: linear-gradient(#262524 55px, #000 55px, #000 57px, #1f1f1e 57px); border: 2px solid #3d3c3b; }

  .menubar {
    position: relative;
    display: flex;
    align-items: center;
    height: 48px;
    padding: 0 38px 0 40px;
    background: linear-gradient(90deg, #42433a 0, #4c4c3e 30%, #525343 55%, #4d4e40 80%, #434338 100%);
    color: #fff;
    font-size: 25px;
    font-weight: 500;
    text-shadow: 0 2px 5px rgba(0, 0, 0, 0.35);
  }
  .apple { width: 27px; height: 36px; margin-top: -3px; }
  .menus { display: flex; gap: 41.6px; margin: -2px 0 0 41px; }
  .menus b { font-weight: 700; letter-spacing: 0.7px; }
  .status { display: flex; align-items: center; margin-left: auto; }
  .status svg { height: 36px; }
  .clock { display: flex; justify-content: space-between; margin: -2px 0 0 19px; width: 253px; white-space: nowrap; color: #efefed; letter-spacing: -0.1px; }
  .time { word-spacing: -3px; }

  .window {
    position: absolute;
    left: 36px;
    top: 51px;
    width: 2844px;
    height: 1626px;
    border-radius: 22px;
    overflow: hidden;
    background: #fefefe;
    box-shadow: 0 0 0 1px #000, 0 20px 60px rgba(0, 0, 0, 0.5);
  }
  .toolbar {
    box-sizing: border-box;
    display: flex;
    align-items: center;
    height: 103px;
    padding: 0 38px 3px 39px;
    background: #383634;
    border-top: 2px solid #6c6b69;
    border-left: 1px solid #6c6b69;
    border-radius: 22px 22px 0 0;
  }
  .lights { display: flex; gap: 16px; }
  .lights i { width: 24px; height: 24px; border-radius: 50%; }
  .red { background: #ec6a5e; }
  .yellow { background: #f4bf4f; }
  .green { background: #61c554; }
  .sidebar { width: 40px; height: 32px; margin: -2px 0 0 52px; }
  .rule { width: 2px; height: 36px; margin-left: 12px; background: #4a4947; }
  .caret { width: 16px; height: 12px; margin-left: 12px; }
  .arrow { width: 18px; height: 30px; margin: -2px 0 0 50px; }
  .fwd { margin-left: 54px; }
  .address {
    box-sizing: border-box;
    display: flex;
    align-items: center;
    justify-content: space-between;
    width: 1151px;
    height: 56px;
    margin-left: 428px;
    padding: 0 9px 0 14px;
    border: 2px solid #4c4b49;
    border-radius: 14px;
    color: #f2f2f1;
    font-size: 25.5px;
  }
  .actions { display: flex; align-items: center; gap: 42px; margin-left: auto; margin-top: -3px; }

  .tabs { display: flex; height: 55px; border-top: 1px solid #000; border-bottom: 1px solid #000; background: #1e1f1e; }
  .tab { box-sizing: border-box; flex: 1; display: flex; align-items: center; justify-content: center; border-right: 2px solid #454544; }
  .tab:nth-child(-n + 3) { flex: none; width: 102px; }
  .tab:last-child { border-right: 0; }
  .tab svg { width: 36px; height: 36px; }
  .tab.active { flex: none; width: 240px; margin-top: -1px; padding: 1px 0 0 46px; gap: 7px; justify-content: flex-start; background: #383634; color: #fff; font-size: 21.5px; font-weight: 500; letter-spacing: -0.2px; white-space: nowrap; }

  .page { position: relative; height: 1466px; overflow: hidden; }
  .site-head {
    box-sizing: border-box;
    display: flex;
    align-items: center;
    height: 161px;
    padding-left: 289px;
    background: #fcfcfc;
    border-bottom: 2px solid #e2e8ee;
  }
  .logo { width: 160px; height: 46px; margin-bottom: 13px; }
  .logo text { font-size: 57px; font-weight: 800; font-feature-settings: 'cv09'; }
  .links { display: flex; align-items: center; gap: 62px; margin-left: 650px; }
  .links a { padding: 0 25px; color: #1e293b; font-size: 28px; font-weight: 500; text-decoration: none; }
  .links .current {
    position: relative;
    box-sizing: border-box;
    height: 79px;
    border-bottom: 4px solid #253985;
    border-radius: 16px;
    color: #253985;
    line-height: 78px;
    margin-top: -2px;
  }
  /* Hairline arcs on the upper corners of the selected link. */
  .links .current::before {
    content: '';
    position: absolute;
    inset: 0 0 auto;
    height: 16px;
    border: 1px solid #c3c6d6;
    border-bottom: 0;
    border-radius: 16px 16px 0 0;
    mask-image: linear-gradient(90deg, #000 14px, transparent 14px, transparent calc(100% - 14px), #000 calc(100% - 14px));
  }
  .moon { width: 36px; height: 36px; margin: -1px 0 0 88px; }
  .trial { margin-left: 123px; color: #fff; font-size: 28px; font-weight: 600; }

  .hero { display: grid; grid-template-columns: 1240px 1240px; gap: 96px; align-items: start; padding: 192px 0 0 134px; }
  .pitch { display: flex; flex-direction: column; align-items: center; }
  .badge {
    display: flex;
    align-items: center;
    gap: 11px;
    box-sizing: border-box;
    width: 618px;
    height: 64px;
    padding-left: 34px;
    border-radius: 32px;
    background: linear-gradient(135deg, #253985, #76127a);
    color: #fff;
    font-size: 32px;
    font-weight: 600;
    letter-spacing: 0.58px;
    white-space: nowrap;
  }
  .badge svg { width: 38px; height: 38px; }
  h1 { margin: 47px 0 0; color: #1e293b; font-size: 80px; font-weight: 600; line-height: 88px; text-align: center; white-space: nowrap; }
  .lead { margin: 33px 0 0; color: #475569; font-size: 40px; line-height: 64px; text-align: center; white-space: nowrap; }
  .sub { margin: 81px 0 0; color: #253985; font-size: 32px; font-weight: 600; line-height: 48px; white-space: nowrap; }
  ul { align-self: flex-start; display: flex; flex-direction: column; gap: 48px; margin: 15px 0 0; padding: 0; list-style: none; color: #475569; font-size: 28px; line-height: 40px; }
  li { display: flex; align-items: center; gap: 9px; white-space: nowrap; }
  li svg { width: 20px; height: 22px; }
  button { box-sizing: border-box; align-self: flex-start; display: flex; align-items: center; height: 120px; border-radius: 32px; font: 500 40px Inter, sans-serif; white-space: nowrap; }
  .cta { width: 783px; margin-top: 64px; padding: 0 0 2px 64px; border: 0; gap: 20px; background: #e8a23b; color: #fff; }
  .cta svg { width: 32px; height: 32px; }
  .demo { width: 441px; margin-top: 32px; padding: 0 0 2px 49px; gap: 13px; border: 2px solid #253985; background: transparent; color: #253985; }
  .demo svg { width: 36px; height: 36px; }

  .panel {
    position: relative;
    box-sizing: border-box;
    display: flex;
    flex-direction: column;
    gap: 32px;
    margin-top: 276px;
    height: 776px;
    padding: 64px;
    border-radius: 40px;
    background: #fff;
    box-shadow: 0 40px 80px rgba(40, 45, 128, 0.19);
  }
  .panel-head { display: flex; align-items: center; gap: 32px; height: 80px; margin-bottom: 16px; }
  .brain { display: grid; place-items: center; width: 80px; height: 80px; border-radius: 8px; background: linear-gradient(45deg, #253985, #76127a); }
  .brain svg, .target svg { width: 40px; height: 40px; }
  h2 { margin: -2px 0 0; color: #1e293b; font-size: 36px; font-weight: 700; white-space: nowrap; }
  article { box-sizing: border-box; height: 152px; padding: 32px; border-radius: 32px; background: rgba(255, 255, 255, 0.7); box-shadow: 0 16px 64px rgba(40, 45, 128, 0.13); }
  article:first-of-type { background: #fff; }
  h3 { display: flex; align-items: center; gap: 8px; margin: 0 0 8px; font-size: 28px; font-weight: 600; line-height: 40px; }
  h3 svg { width: 34px; height: 34px; }
  article p { margin: 0; color: #475569; font-size: 28px; line-height: 40px; }
  .navy { color: #253985; }
  .teal { color: #3f8fae; }
  .gold { color: #e8a23b; }
  .target { position: absolute; top: -32px; right: -32px; display: grid; place-items: center; width: 112px; height: 112px; border-radius: 8px; background: linear-gradient(45deg, #4da8bb, #253985); box-shadow: 0 40px 100px rgba(40, 45, 128, 0.16); }

  .scroll { position: absolute; right: 4px; top: 4px; width: 14px; height: 175px; border-radius: 7px; background: #7f7f7f; }
  .issues {
    position: absolute;
    left: 38px;
    top: 1353px;
    box-sizing: border-box;
    display: flex;
    align-items: center;
    width: 255px;
    height: 76px;
    padding-left: 2px;
    border: 2px solid #151515;
    border-radius: 38px;
    background: #b93937;
    box-shadow: inset 0 0 0 2px #d04a4a, 0 16px 56px rgba(0, 0, 0, 0.2);
    color: #fff;
    font-size: 25.5px;
    font-weight: 500;
    white-space: nowrap;
  }
  .next { display: grid; place-items: center; width: 65px; height: 65px; margin-right: 21px; border-radius: 50%; background: #c95f5e; }
  .next svg { width: 28px; height: 32px; }
  .count { width: 99px; margin-top: -1px; word-spacing: -4px; }
  .x { width: 20px; height: 20px; margin-left: 18px; }

  .dock {
    position: absolute;
    left: 74px;
    top: 1680px;
    box-sizing: border-box;
    display: flex;
    align-items: flex-start;
    width: 2732px;
    height: 111px;
    padding: 13px 0 0 5px;
    border: 2px solid #484a45;
    border-radius: 38px;
    background: linear-gradient(90deg, #1b241b 0, #1d2219 12%, #2c1f16 28%, #2b2017 33%, #20241b 38%, #1c2418 70%, #2a2418 85%, #2b2519 95%, #241f18 100%);
    box-shadow: 0 0 90px rgba(0, 0, 0, 0.3);
  }
  .app { position: relative; display: grid; justify-items: center; width: 90.880px; }
  .app svg { width: 73px; height: 73px; }
  .app em { position: absolute; left: 56px; top: -9px; width: 34px; border-radius: 17px; background: #e04b3b; color: #fff; font: 400 22px/34px Inter, sans-serif; text-align: center; letter-spacing: -0.5px; }
  .dot { width: 8px; height: 8px; margin-top: 9px; border-radius: 50%; background: #9b9d95; }
  .split { width: 2px; height: 83px; margin: -2px 20px 0; background: #595b55; }
</style>
